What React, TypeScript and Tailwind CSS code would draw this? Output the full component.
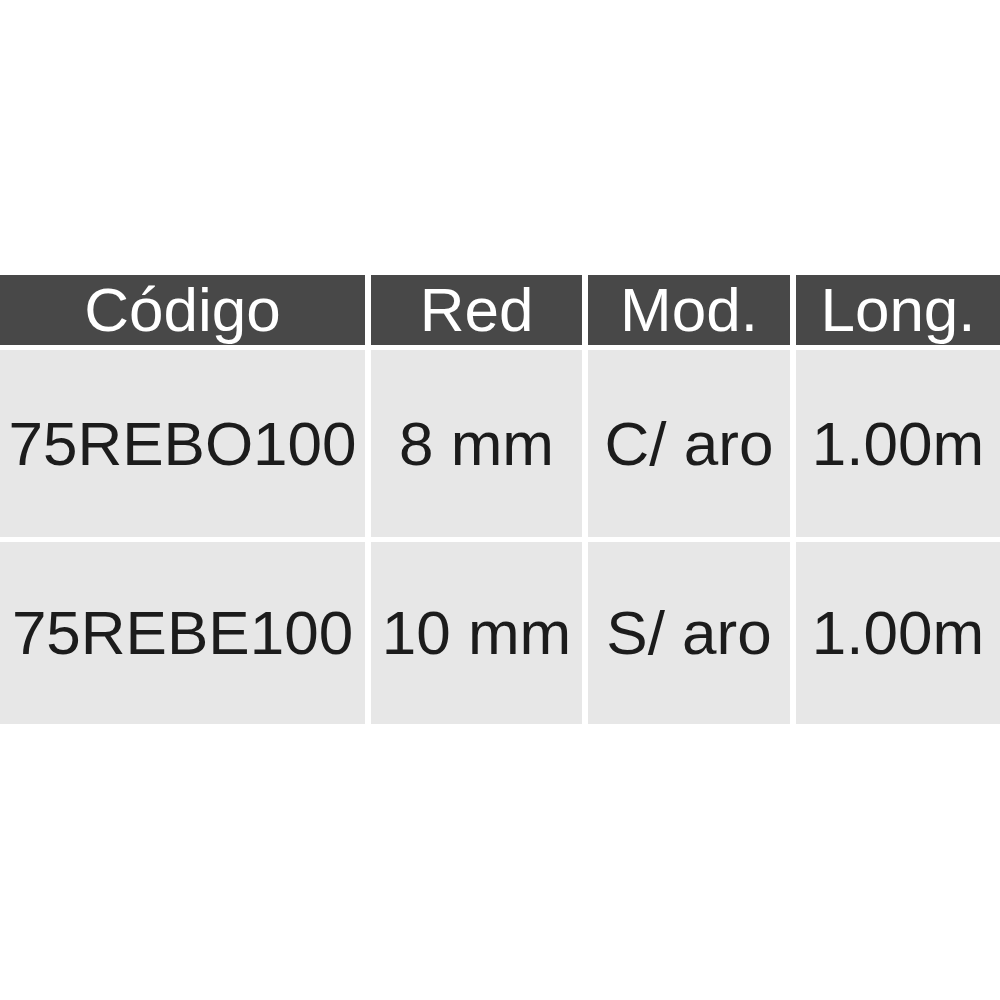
const rows = [
  ['75REBO100', '8 mm', 'C/ aro', '1.00m'],
  ['75REBE100', '10 mm', 'S/ aro', '1.00m'],
]

const heads = ['Código', 'Red', 'Mod.', 'Long.']

export default function App() {
  return (
    <div className="w-[1000px] h-[1000px] bg-white pt-[275px] overflow-hidden" style={{ fontFamily: '"Liberation Sans", Arial, sans-serif' }}>
      <div className="grid grid-cols-[365px_211px_202px_204px] gap-x-[6px] gap-y-[5px]">
        {heads.map((h) => (
          <div key={h} className="h-[70px] bg-[#484848] text-white text-[62px] leading-none flex items-center justify-center whitespace-nowrap">
            {h}
          </div>
        ))}
        {rows.map((r, i) =>
          r.map((c, j) => (
            <div
              key={i + '-' + j}
              className={`${i === 0 ? 'h-[187px]' : 'h-[182px]'} bg-[#e7e7e7] text-[#1c1c1c] text-[62px] leading-none flex items-center justify-center whitespace-nowrap`}
            >
              {c}
            </div>
          ))
        )}
      </div>
    </div>
  )
}
